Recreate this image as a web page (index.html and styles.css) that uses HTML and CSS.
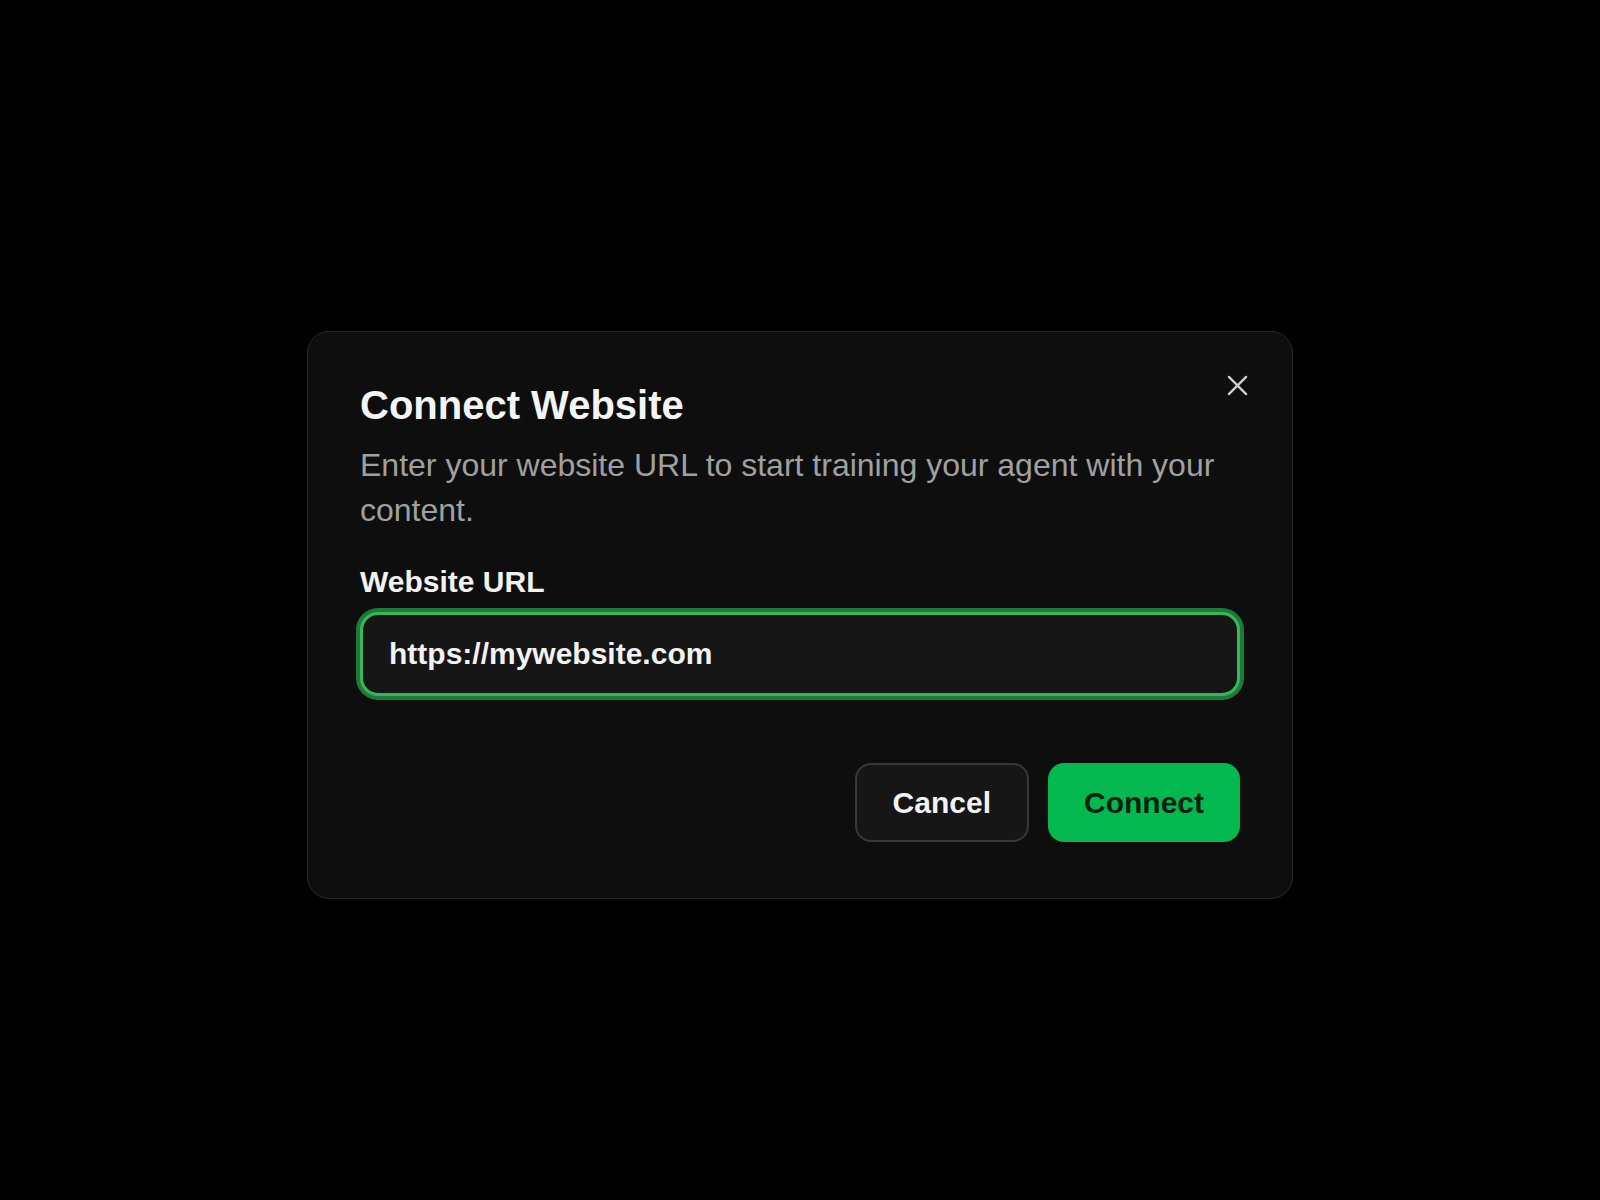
FILE: index.html
```html
<!DOCTYPE html>
<html lang="en">
<head>
<meta charset="utf-8">
<title>Connect Website</title>
<link rel="stylesheet" href="styles.css">
</head>
<body>
<div class="backdrop">
  <div class="modal" role="dialog" aria-labelledby="title">
    <button class="close" aria-label="Close">
      <svg width="23" height="23" viewBox="0 0 24 24" fill="none" stroke="currentColor" stroke-width="2.4" stroke-linecap="round"><path d="M3 3L21 21M21 3L3 21"/></svg>
    </button>
    <h2 id="title" class="title">Connect Website</h2>
    <p class="desc">Enter your website URL to start training your agent with your content.</p>
    <label class="label" for="url">Website URL</label>
    <input id="url" class="input" type="text" value="https://mywebsite.com">
    <div class="actions">
      <button class="btn btn-cancel">Cancel</button>
      <button class="btn btn-connect">Connect</button>
    </div>
  </div>
</div>
</body>
</html>
```
FILE: styles.css
```css
* { box-sizing: border-box; }
html, body { margin: 0; padding: 0; background: #000; }
body { font-family: "Liberation Sans", Arial, sans-serif; }
.backdrop {
  min-height: 1200px;
  display: flex;
  justify-content: center;
  align-items: flex-start;
  padding-top: 331px;
}
.modal {
  position: relative;
  width: 986px;
  background: #0e0e0e;
  border: 1px solid #282828;
  border-radius: 22px;
  padding: 49px 52px 56px;
  display: flex;
  flex-direction: column;
}
.close {
  position: absolute;
  top: 41px;
  right: 42px;
  width: 25px;
  height: 25px;
  padding: 1px;
  border: 0;
  background: transparent;
  color: #cfcfcf;
  display: flex;
  align-items: center;
  justify-content: center;
}
.title {
  margin: 0;
  font-size: 40px;
  line-height: 48px;
  font-weight: 700;
  color: #f4f4f4;
}
.desc {
  margin: 14px 0 0;
  font-size: 32px;
  line-height: 45px;
  color: #a0a0a0;
}
.label {
  margin-top: 31px;
  font-size: 30px;
  line-height: 36px;
  font-weight: 700;
  color: #f2f2f2;
}
.input {
  margin-top: 12px;
  height: 84px;
  width: 100%;
  padding: 0 26px;
  font-family: "Liberation Sans", Arial, sans-serif;
  font-size: 30px;
  font-weight: 700;
  color: #f2f2f2;
  background: #161616;
  border: 3px solid #36b85a;
  border-radius: 18px;
  box-shadow: 0 0 0 4px #1e7a38;
  outline: none;
}
.actions {
  margin-top: 67px;
  display: flex;
  justify-content: flex-end;
  gap: 19px;
}
.btn {
  height: 79px;
  padding: 0 36px;
  border-radius: 16px;
  font-family: "Liberation Sans", Arial, sans-serif;
  font-size: 30px;
  font-weight: 700;
  line-height: 1;
}
.btn-cancel {
  background: #161616;
  color: #f2f2f2;
  border: 2px solid #383838;
}
.btn-connect {
  background: #03b84f;
  color: #0b1f10;
  border: 0;
}
```
